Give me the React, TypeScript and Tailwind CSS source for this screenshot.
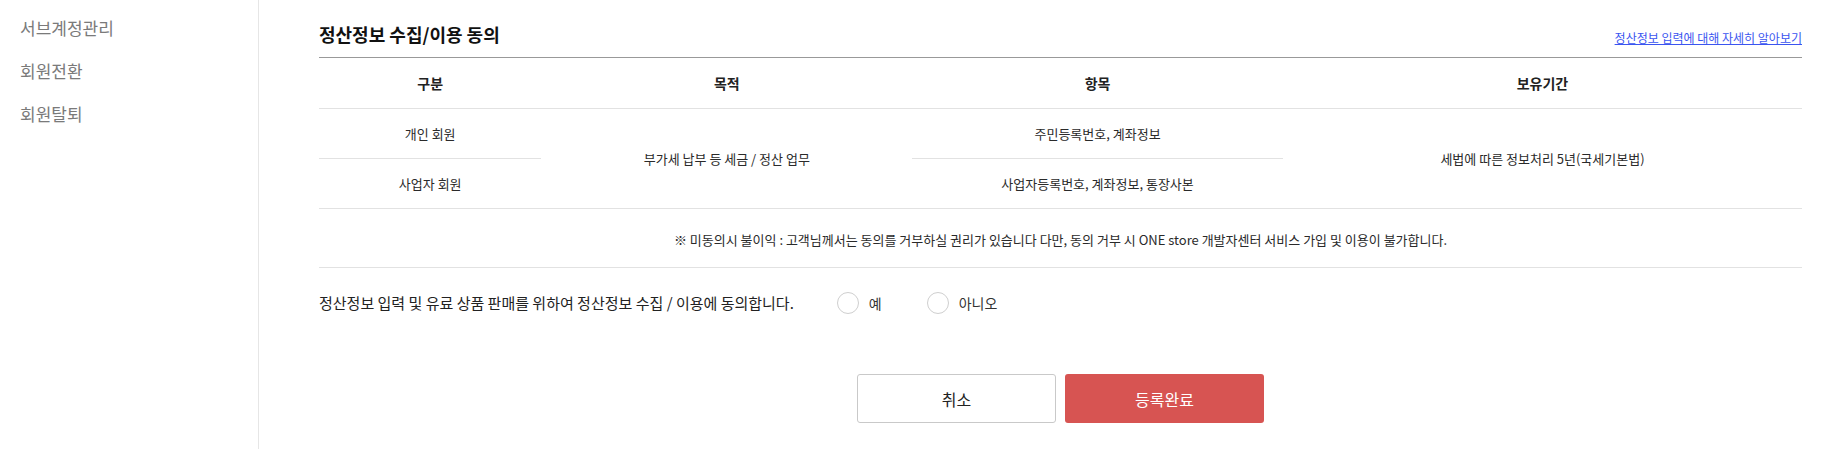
const font = "font-['Noto_Sans_CJK_KR','Noto_Sans',sans-serif]"

const SideMenu = () => {
    const items = ["서브계정관리", "회원전환", "회원탈퇴"]
    return (
        <div className="w-[259px] shrink-0 border-r border-[#e6e6e6] pt-[6px] pl-[20px]">
            {items.map((item) => (
                <div key={item} className="text-[17px] leading-[43px] text-[#7a7a7a]">
                    {item}
                </div>
            ))}
        </div>
    )
}

const Radio = ({ label }: { label: string }) => {
    return (
        <label className="flex items-center gap-[10px] cursor-pointer">
            <span className="w-[22px] h-[22px] rounded-full border-[1.5px] border-[#cfcfcf] bg-white" />
            <span className="text-[14px] text-[#333]">{label}</span>
        </label>
    )
}

export default function App() {
    return (
        <div className={`flex w-[1822px] h-[449px] bg-white ${font}`}>
            <SideMenu />
            <div className="flex-1 pl-[60px] pr-[20px]">
                <div className="flex justify-between items-end h-[57px] pb-[11px]">
                    <div className="text-[18px] leading-[24px] font-bold text-[#111]">
                        정산정보 수집/이용 동의
                    </div>
                    <a href="#" className="text-[12px] leading-[16px] text-[#3b55f0] underline">
                        정산정보 입력에 대해 자세히 알아보기
                    </a>
                </div>

                <div className="grid grid-cols-[15fr_25fr_25fr_35fr] h-[52px] border-t border-b border-t-[#999] border-b-[#e2e2e2] text-[14px] font-semibold text-[#222]">
                    <div className="flex items-center justify-center">구분</div>
                    <div className="flex items-center justify-center">목적</div>
                    <div className="flex items-center justify-center">항목</div>
                    <div className="flex items-center justify-center">보유기간</div>
                </div>

                <div className="grid grid-cols-[15fr_25fr_25fr_35fr] border-b border-[#e2e2e2] text-[13px] text-[#2a2a2a]">
                    <div className="flex flex-col">
                        <div className="flex items-center justify-center h-[50px] border-b border-[#e2e2e2]">개인 회원</div>
                        <div className="flex items-center justify-center h-[49px]">사업자 회원</div>
                    </div>
                    <div className="flex items-center justify-center">부가세 납부 등 세금 / 정산 업무</div>
                    <div className="flex flex-col">
                        <div className="flex items-center justify-center h-[50px] border-b border-[#e2e2e2]">주민등록번호, 계좌정보</div>
                        <div className="flex items-center justify-center h-[49px]">사업자등록번호, 계좌정보, 통장사본</div>
                    </div>
                    <div className="flex items-center justify-center">세법에 따른 정보처리 5년(국세기본법)</div>
                </div>

                <div className="flex items-center justify-center h-[59px] pt-[3px] border-b border-[#e2e2e2] text-[13px] text-[#2a2a2a]">
                    ※ 미동의시 불이익 : 고객님께서는 동의를 거부하실 권리가 있습니다 다만, 동의 거부 시 ONE store 개발자센터 서비스 가입 및 이용이 불가합니다.
                </div>

                <div className="flex items-center h-[70px]">
                    <div className="text-[15px] text-[#222]">
                        정산정보 입력 및 유료 상품 판매를 위하여 정산정보 수집 / 이용에 동의합니다.
                    </div>
                    <div className="flex items-center gap-[45px] ml-[43px]">
                        <Radio label="예" />
                        <Radio label="아니오" />
                    </div>
                </div>

                <div className="flex justify-center gap-[9px] mt-[36px]">
                    <button className="w-[199px] h-[49px] rounded-[3px] border border-[#c9c9c9] bg-white text-[16px] text-[#222]">
                        취소
                    </button>
                    <button className="w-[199px] h-[49px] rounded-[3px] bg-[#d75452] text-[16px] text-white">
                        등록완료
                    </button>
                </div>
            </div>
        </div>
    )
}
